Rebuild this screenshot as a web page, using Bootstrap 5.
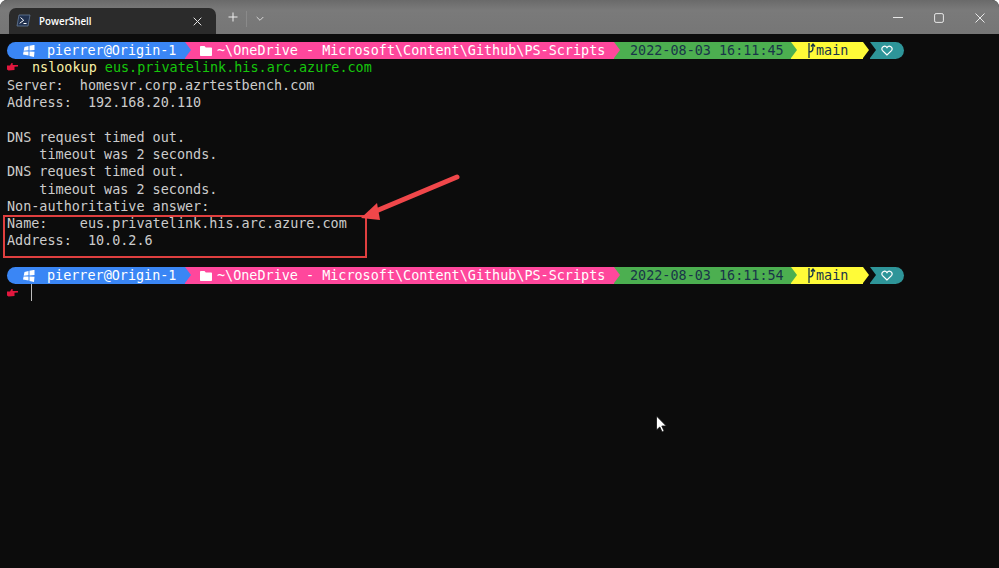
<!DOCTYPE html>
<html lang="en">
<head>
<meta charset="utf-8">
<title>PowerShell</title>
<link href="https://cdn.jsdelivr.net/npm/bootstrap@5.3.0/dist/css/bootstrap.min.css" rel="stylesheet">
<style>
html,body{height:100%;margin:0;background:#fff;overflow:hidden}
.win{position:relative;width:999px;height:568px;border-radius:7px 7px 0 0;overflow:hidden;background:#0c0c0c;font-family:"Liberation Sans",sans-serif}
.titlebar{height:34px;background:linear-gradient(#6a6a6a,#7a7a7a 30%,#767676);border-bottom:0}
.tabx{margin:8px 0 0 9px;width:207px;height:26px;background:#2b2b2b;border-radius:7px 7px 0 0;color:#fff;font:600 9.8px "Open Sans",sans-serif;padding:0 14px 0 7px}
.tabt{margin-left:8px}
.tabicon{margin-top:-1px}
.newtab{margin-left:12px;margin-top:7px}
.sepv{width:1px;height:16px;background:#8a8a8a;margin:11px 0 0 8px}
.caps{margin-left:auto;padding-right:14px;gap:31px;padding-top:13px}
.term{padding:8.2px 0 0 7px;font:13.45px/17.3px "DejaVu Sans Mono",monospace;color:#cccccc}
.ln{height:17.3px;white-space:pre}
.prompt{height:17.3px;color:#fff;white-space:pre}
.sg{position:relative;height:17.3px;line-height:17.3px}
.sg::after{content:"";position:absolute;right:-6px;top:0;border-left:6px solid currentColor;border-top:8.65px solid transparent;border-bottom:8.65px solid transparent;z-index:2}
.s1{width:178px;background:#3a86f5;border-radius:9px 0 0 9px;padding-left:15px;z-index:5;color:#3a86f5}
.s2{width:429px;background:#ff479c;padding-left:15px;color:#ff479c;z-index:4}
.s3{width:177px;background:#4caf50;padding-left:16px;color:#4caf50;z-index:3}
.s4{width:72px;background:#fffb38;padding-left:16px;color:#fffb38;z-index:2}
.s5{width:34px;margin-left:7px;background:#2e9599;border-radius:0 9px 9px 0;color:#2e9599}
.s5::after{display:none}
.s5::before{content:"";position:absolute;left:0;top:0;border-left:6px solid #0c0c0c;border-top:8.65px solid transparent;border-bottom:8.65px solid transparent}
.tw{color:#fff}.td{color:#193549}
.flex0{flex:none}
.pn{margin-left:12px}.pp{margin-left:5px}
.cmd{color:#f9f1a5}.arg{color:#16c60c}
.hand{margin-right:14px;vertical-align:1px}
.caret{display:inline-block;width:1px;height:17px;background:#bdbdbd;vertical-align:-3px;margin-left:-1px}
.chev{margin:16px 0 0 9px}
.redbox{position:absolute;left:3px;top:215px;width:364px;height:43px;border:2px solid #e03f3f}
.anno{position:absolute;left:0;top:0;pointer-events:none}
</style>
</head>
<body>
<div class="win">
  <div class="titlebar d-flex">
    <div class="tabx d-flex align-items-center">
      <svg class="tabicon flex0" width="15" height="13" viewBox="0 0 15 13"><path d="M3 1h11l-2 11H1z" fill="#22324f" stroke="#6f86a8" stroke-width=".7"/><path d="M4.500 3.500l3.200 2.800-4 3M7.500 9.500h3" fill="none" stroke="#fff" stroke-width="1"/></svg>
      <span class="tabt">PowerShell</span>
      <svg class="ms-auto" width="9" height="9" viewBox="0 0 9 9"><path d="M.7.7l7.600 7.600M8.300.7L.7 8.300" stroke="#e4e4e4" stroke-width="1" fill="none"/></svg>
    </div>
    <svg class="newtab flex0" width="10" height="20" viewBox="0 0 10 20"><path d="M5 5.500v9M.5 10h9" stroke="#f0f0f0" stroke-width="1" fill="none"/></svg>
    <div class="sepv"></div>
    <svg class="flex0 chev" width="8" height="6" viewBox="0 0 8 6"><path d="M.7 1l3.300 3.300L7.300 1" stroke="#d8d8d8" stroke-width="1" fill="none"/></svg>
    <div class="caps d-flex">
      <svg width="10" height="10" viewBox="0 0 10 10"><path d="M0 4.500h10" stroke="#e8e8e8" stroke-width="1"/></svg>
      <svg width="10" height="10" viewBox="0 0 10 10"><rect x=".6" y=".6" width="8.800" height="8.800" rx="1.500" fill="none" stroke="#e8e8e8" stroke-width="1"/></svg>
      <svg width="10" height="10" viewBox="0 0 10 10"><path d="M.5.500l9 9M9.500.500l-9 9" stroke="#e8e8e8" stroke-width="1"/></svg>
    </div>
  </div>
  <div class="term">
    <div class="prompt d-flex">
      <div class="sg s1 d-flex align-items-center"><svg class="flex0" width="13" height="12" viewBox="0 0 13 12"><path d="M2.500 2l4-1v4.300l-4.800.4zM7.500.8l5-1v5.300l-5 .3zM1.600 6.500l4.900.1v4l-5.500-1zM7.500 6.600l5 .1L12 12l-4.500-1z" fill="#fff"/></svg><span class="tw pn">pierrer@Origin-1</span></div>
      <div class="sg s2 d-flex align-items-center"><svg class="flex0" width="12" height="10" viewBox="0 0 12 10"><path d="M0 1.200C0 .5.400 0 1 0h3.500l1.300 1.500H11c.6 0 1 .4 1 1V9c0 .6-.4 1-1 1H1c-.6 0-1-.4-1-1z" fill="#fff"/></svg><span class="tw pp">~\OneDrive - Microsoft\Content\Github\PS-Scripts</span></div>
      <div class="sg s3"><span class="td">2022-08-03 16:11:45</span></div>
      <div class="sg s4 d-flex align-items-center"><svg class="flex0" width="9" height="15" viewBox="0 0 9 15"><path d="M2 0v15M2 9c4 0 4-2 4-7M4 3.500L6 1l2 2.500" fill="none" stroke="#193549" stroke-width="1.300"/></svg><span class="td">main</span></div>
      <div class="sg s5 d-flex align-items-center justify-content-center"><svg width="12" height="11" viewBox="0 0 12 11"><path d="M6 10L1.300 5.300C-.5 2.500 3.800-.5 6 2.600 8.200-.5 12.500 2.500 10.700 5.300z" fill="none" stroke="#fff" stroke-width="1.200"/></svg></div>
    </div>
    <div class="ln"><svg class="hand" width="11" height="8" viewBox="0 0 11 8"><path d="M0 2.500H3L4.500 0 6 .5 5.500 2H11V3.500L7.500 3.800V7L1.500 7.500 0 6.500z" fill="#e3173e"/></svg><span class="cmd">nslookup</span> <span class="arg">eus.privatelink.his.arc.azure.com</span></div>
    <div class="ln">Server:  homesvr.corp.azrtestbench.com</div>
    <div class="ln">Address:  192.168.20.110</div>
    <div class="ln"></div>
    <div class="ln">DNS request timed out.</div>
    <div class="ln">    timeout was 2 seconds.</div>
    <div class="ln">DNS request timed out.</div>
    <div class="ln">    timeout was 2 seconds.</div>
    <div class="ln">Non-authoritative answer:</div>
    <div class="ln">Name:    eus.privatelink.his.arc.azure.com</div>
    <div class="ln">Address:  10.0.2.6</div>
    <div class="ln"></div>
    <div class="prompt d-flex">
      <div class="sg s1 d-flex align-items-center"><svg class="flex0" width="13" height="12" viewBox="0 0 13 12"><path d="M2.500 2l4-1v4.300l-4.800.4zM7.500.8l5-1v5.300l-5 .3zM1.600 6.500l4.900.1v4l-5.500-1zM7.500 6.600l5 .1L12 12l-4.500-1z" fill="#fff"/></svg><span class="tw pn">pierrer@Origin-1</span></div>
      <div class="sg s2 d-flex align-items-center"><svg class="flex0" width="12" height="10" viewBox="0 0 12 10"><path d="M0 1.200C0 .5.400 0 1 0h3.500l1.300 1.500H11c.6 0 1 .4 1 1V9c0 .6-.4 1-1 1H1c-.6 0-1-.4-1-1z" fill="#fff"/></svg><span class="tw pp">~\OneDrive - Microsoft\Content\Github\PS-Scripts</span></div>
      <div class="sg s3"><span class="td">2022-08-03 16:11:54</span></div>
      <div class="sg s4 d-flex align-items-center"><svg class="flex0" width="9" height="15" viewBox="0 0 9 15"><path d="M2 0v15M2 9c4 0 4-2 4-7M4 3.500L6 1l2 2.500" fill="none" stroke="#193549" stroke-width="1.300"/></svg><span class="td">main</span></div>
      <div class="sg s5 d-flex align-items-center justify-content-center"><svg width="12" height="11" viewBox="0 0 12 11"><path d="M6 10L1.300 5.300C-.5 2.500 3.800-.5 6 2.600 8.200-.5 12.500 2.500 10.700 5.300z" fill="none" stroke="#fff" stroke-width="1.200"/></svg></div>
    </div>
    <div class="ln"><svg class="hand" width="11" height="8" viewBox="0 0 11 8"><path d="M0 2.500H3L4.500 0 6 .5 5.500 2H11V3.500L7.500 3.800V7L1.500 7.500 0 6.500z" fill="#e3173e"/></svg><span class="caret"></span></div>
  </div>
  <div class="redbox"></div>
  <svg class="anno" width="999" height="568" viewBox="0 0 999 568">
    <path d="M457 177L376 211" stroke="#f0474a" stroke-width="5" stroke-linecap="round" fill="none"/>
    <path d="M361 218L377 203 380 220z" fill="#f0474a"/>
    <path d="M656.500 416v14l3.300-3 2.300 5 2-1-2.300-5h4.500z" fill="#fff" stroke="#111" stroke-width=".8"/>
  </svg>
</div>
</body>
</html>
